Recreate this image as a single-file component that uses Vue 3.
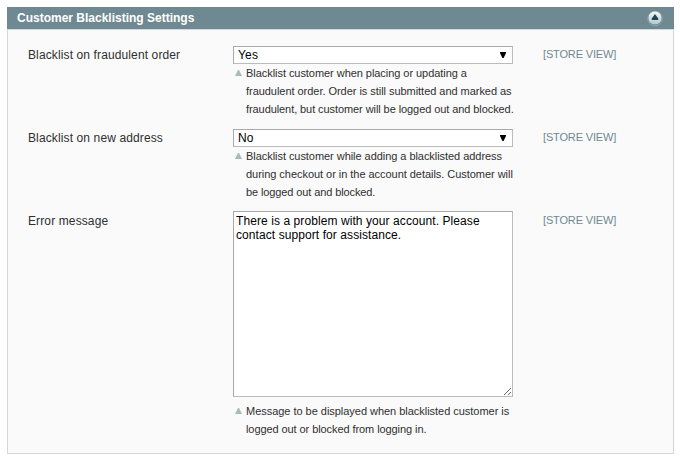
<template>
  <div class="section-config">
    <div class="entry-head" @click="isOpen = !isOpen">
      <h3>Customer Blacklisting Settings</h3>
      <svg class="toggle" :class="{ closed: !isOpen }" width="16" height="17" viewBox="0 0 16 17">
        <defs>
          <linearGradient id="toggle-fill" x1="0" y1="0" x2="0" y2="1">
            <stop offset="0" stop-color="#f4f8f8" />
            <stop offset="1" stop-color="#b5c7cc" />
          </linearGradient>
        </defs>
        <circle cx="8" cy="8.5" r="7.3" fill="#587780" stroke="#91a8ae" stroke-width="1" />
        <circle cx="8" cy="8" r="6.6" fill="url(#toggle-fill)" />
        <path d="M8 4 L11.2 8.6 V10 H4.8 V8.6 Z" fill="#1f4654" />
      </svg>
    </div>
    <div v-if="isOpen" class="fieldset">
      <div v-for="field in fields" :key="field.id" class="row">
        <label class="label" :for="field.id">{{ field.label }}</label>
        <div class="value" :class="field.type">
          <div v-if="field.type === 'select'" class="select-wrap">
            <select :id="field.id" v-model="field.value">
              <option>Yes</option>
              <option>No</option>
            </select>
            <svg class="arrow" width="6" height="6" viewBox="0 0 6 6">
              <path d="M0 0 H6 V1 L3.6 6 H2.4 L0 1 Z" fill="#000" />
            </svg>
          </div>
          <textarea v-else :id="field.id" v-model="field.value" spellcheck="false"></textarea>
          <div class="note">
            <svg class="note-mark" width="7" height="6" viewBox="0 0 7 6">
              <path d="M3 0 H4 L7 6 H0 Z" fill="#a9b9bd" />
            </svg>
            <p>
              <span
                v-for="line in field.note"
                :key="line.text"
                :style="{ letterSpacing: line.tracking + 'px' }"
              >{{ line.text }}</span>
            </p>
          </div>
        </div>
        <div class="scope">[STORE VIEW]</div>
      </div>
    </div>
  </div>
</template>

<script setup>
import { ref } from 'vue'

const isOpen = ref(true)

const fields = ref([
  {
    id: 'fraudulent_order',
    label: 'Blacklist on fraudulent order',
    type: 'select',
    value: 'Yes',
    note: [
      { text: 'Blacklist customer when placing or updating a', tracking: -0.05 },
      { text: 'fraudulent order. Order is still submitted and marked as', tracking: -0.04 },
      { text: 'fraudulent, but customer will be logged out and blocked.', tracking: -0.08 }
    ]
  },
  {
    id: 'new_address',
    label: 'Blacklist on new address',
    type: 'select',
    value: 'No',
    note: [
      { text: 'Blacklist customer while adding a blacklisted address', tracking: -0.05 },
      { text: 'during checkout or in the account details. Customer will', tracking: -0.04 },
      { text: 'be logged out and blocked.', tracking: -0.11 }
    ]
  },
  {
    id: 'error_message',
    label: 'Error message',
    type: 'textarea',
    value: 'There is a problem with your account. Please contact support for assistance.',
    note: [
      { text: 'Message to be displayed when blacklisted customer is', tracking: -0.03 },
      { text: 'logged out or blocked from logging in.', tracking: -0.08 }
    ]
  }
])
</script>

<style>
body {
  background: #fff;
}
</style>

<style scoped>
.section-config {
  width: 667px;
  margin: 7px;
  font-family: "Liberation Sans", Arial, sans-serif;
  font-size: 12px;
  color: #2f2f2f;
}

.entry-head {
  display: flex;
  align-items: center;
  justify-content: space-between;
  height: 22px;
  padding: 0 11px 0 10px;
  background: #6f8992;
  cursor: pointer;
}

.entry-head h3 {
  margin: 0;
  font-size: 12px;
  line-height: 18px;
  color: #fff;
}

.toggle {
  margin-top: 1px;
}

.toggle.closed {
  transform: rotate(180deg);
}

.fieldset {
  box-sizing: border-box;
  height: 425px;
  padding: 16px 20px 0;
  background: #fafafa;
  border: 1px solid #d6d6d6;
}

.row {
  display: flex;
  align-items: flex-start;
  margin-bottom: 11px;
}

.label {
  width: 205px;
  line-height: 18px;
  letter-spacing: 0.12px;
}

.value {
  width: 280px;
}

.value.textarea {
  margin-top: -1px;
}

.select-wrap {
  position: relative;
  height: 18px;
}

select {
  display: block;
  box-sizing: border-box;
  width: 280px;
  height: 18px;
  margin: 0;
  padding: 0 4px;
  appearance: none;
  font: 12px "Liberation Sans", Arial, sans-serif;
  letter-spacing: 0.2px;
  color: #000;
  background: #fff;
  border: 1px solid #a9a9a9;
  border-right-color: #bbb;
  border-bottom-color: #bbb;
  border-radius: 0;
}

.arrow {
  position: absolute;
  top: 6px;
  right: 7px;
  pointer-events: none;
}

textarea {
  display: block;
  box-sizing: border-box;
  width: 280px;
  height: 186px;
  margin: 0 0 5px;
  padding: 2px;
  font: 12px/14px "Liberation Sans", Arial, sans-serif;
  letter-spacing: 0.08px;
  color: #000;
  background: #fff;
  border: 1px solid #a9a9a9;
  border-right-color: #bbb;
  border-bottom-color: #bbb;
  border-radius: 0;
  outline: none;
}

.note {
  display: flex;
  font-size: 11px;
  line-height: 18px;
}

.note-mark {
  flex: none;
  margin: 6px 4px 0 2px;
}

.note p {
  margin: 0;
}

.note span {
  display: block;
  white-space: nowrap;
}

.scope {
  margin: -1px 0 0 30px;
  font-size: 11px;
  line-height: 18px;
  letter-spacing: -0.15px;
  color: #6f8992;
}
</style>
